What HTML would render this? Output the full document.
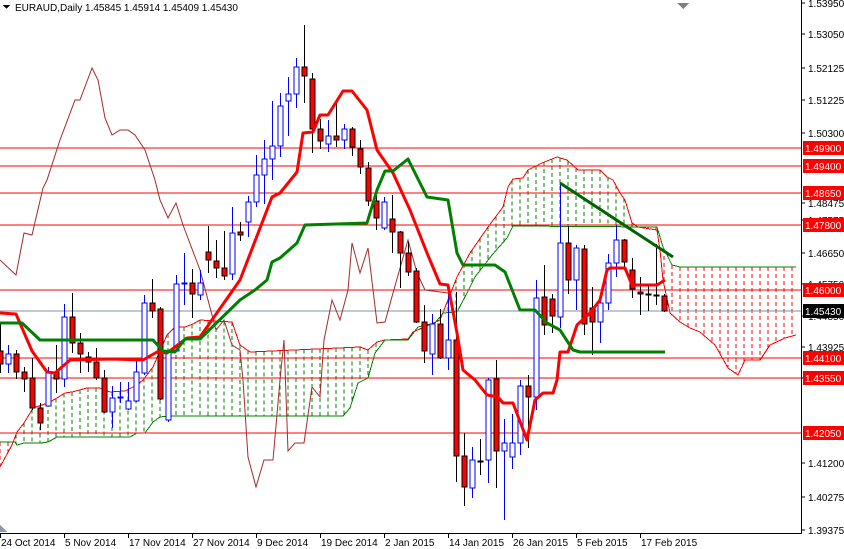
<!DOCTYPE html>
<html><head><meta charset="utf-8">
<style>
html,body{margin:0;padding:0;background:#fff;width:844px;height:549px;overflow:hidden}
svg{display:block;font-family:"Liberation Sans",sans-serif}
</style></head><body>
<svg id="s" width="844" height="549" xmlns="http://www.w3.org/2000/svg" shape-rendering="crispEdges"></svg>
<script>
var s=document.getElementById('s'),h='';
function P(a){return a.map(function(p){return p[0]+','+p[1]}).join(' ')}
function itp(a,x){if(x<=a[0][0])return a[0][1];for(var i=1;i<a.length;i++){if(x<=a[i][0]){var t=(x-a[i-1][0])/(a[i][0]-a[i-1][0]);return a[i-1][1]+t*(a[i][1]-a[i-1][1]);}}return a[a.length-1][1];}
var A=[[0,467],[12,445],[17,432],[24,423],[33,408],[48,403],[57,398],[65,393],[72,392],[87,388],[100,388],[110,392],[125,391],[137,385],[143,380],[153,367],[167,335],[175,327],[185,327],[193,324],[200,320],[232,322],[240,345],[250,352],[360,347],[368,350],[377,342],[385,340],[408,339],[413,332],[440,320],[457,277],[470,253],[488,227],[503,207],[508,187],[513,179],[523,178],[528,170],[542,163],[557,157],[567,160],[578,170],[600,170],[607,177],[613,180],[620,193],[625,200],[632,223],[638,227],[657,230],[660,250],[663,280],[670,313],[680,322],[690,328],[700,332],[715,345],[728,368],[738,375],[745,360],[760,360],[770,345],[785,338],[796,335]];
var B=[[0,442],[15,442],[17,445],[24,443],[41,443],[48,442],[57,437],[130,437],[137,433],[145,433],[153,422],[160,417],[168,416],[343,416],[350,408],[358,383],[368,378],[375,353],[385,340],[408,340],[418,327],[435,323],[443,313],[457,312],[467,293],[475,277],[492,255],[507,238],[513,226],[657,227],[663,247],[672,265],[680,267],[796,267]];
for(var x=0;x<=796;x+=8){var a=itp(A,x),b=itp(B,x);var c=a<b?'#008000':'#ff0000';h+='<line x1="'+x+'" y1="'+Math.min(a,b)+'" x2="'+x+'" y2="'+Math.max(a,b)+'" stroke="'+c+'" stroke-width="1" stroke-dasharray="4,3"/>';}
h+='<polyline points="'+P(A)+'" fill="none" stroke="#ff0000" stroke-width="1"/>';
h+='<polyline points="'+P(B)+'" fill="none" stroke="#008000" stroke-width="1"/>';
[148,166,193,225,290,358,378,433].forEach(function(y){h+='<line x1="0" y1="'+y+'" x2="801" y2="'+y+'" stroke="#ff0000" stroke-width="1"/>';});
h+='<line x1="0" y1="311" x2="801" y2="311" stroke="#8090a0" stroke-width="1"/>';
var C=[[0,260],[16,275],[24,233],[32,235],[43,188],[47,180],[60,140],[75,100],[80,100],[92,68],[98,80],[105,118],[112,135],[120,130],[128,130],[135,135],[145,150],[155,180],[160,200],[168,218],[176,203],[183,225],[200,270],[208,300],[216,330],[224,320],[232,345],[240,350],[243,380],[248,457],[256,487],[264,460],[273,460],[280,380],[284,340],[288,451],[295,443],[304,443],[312,387],[320,397],[324,340],[332,300],[340,320],[348,290],[352,243],[360,273],[368,248],[377,323],[385,322],[393,293],[408,240],[417,273],[425,290],[448,293]];
h+='<polyline points="'+P(C)+'" fill="none" stroke="#a52a2a" stroke-width="1" shape-rendering="auto"/>';
var K=[[0,351,364,323,373],[8,364,354,345,373],[16,354,372,350,379],[24,372,379,367,392],[32,378,408,358,410],[40,408,423,403,430],[48,406,372,367,406],[56,372,379,345,393],[64,379,317,304,387],[72,317,343,293,353],[80,343,354,333,373],[88,357,362,352,372],[96,362,378,348,380],[104,378,412,370,413],[112,412,398,386,428],[120,398,397,382,403],[128,409,401,382,410],[136,401,372,360,402],[144,373,303,295,375],[152,303,311,279,318],[160,309,399,307,400],[168,420,351,350,422],[176,351,284,275,352],[184,284,283,253,305],[192,283,294,269,318],[200,295,283,270,300],[208,252,260,226,273],[216,261,268,240,278],[224,268,276,231,280],[232,274,233,207,280],[240,232,235,222,241],[248,222,202,196,237],[256,202,175,155,207],[264,175,159,140,204],[272,159,146,101,180],[280,146,106,93,157],[288,101,94,77,136],[296,94,67,58,108],[304,67,76,25,103],[312,79,129,73,153],[320,129,141,119,149],[328,144,136,120,152],[336,136,140,103,147],[344,140,129,124,149],[352,129,147,127,156],[360,149,167,140,174],[368,168,201,162,206],[376,201,218,193,230],[384,228,202,197,230],[392,219,232,195,253],[400,232,253,231,288],[408,253,272,242,276],[416,271,322,268,323],[424,322,351,305,363],[432,354,324,314,375],[440,324,358,309,359],[448,358,340,292,370],[456,340,456,292,482],[464,456,487,433,506],[472,488,460,447,498],[480,461,461,439,475],[488,460,380,378,483],[496,379,451,360,488],[504,451,443,419,520],[512,457,443,414,469],[520,443,386,380,455],[528,386,397,375,448],[536,397,298,280,410],[544,297,325,265,335],[552,299,316,294,333],[560,317,243,183,328],[568,243,280,226,294],[576,280,248,245,310],[584,249,324,245,335],[592,308,322,287,355],[600,322,303,298,343],[608,303,263,254,310],[616,263,240,225,277],[624,240,262,239,270],[632,270,289,258,298],[640,292,294,277,315],[648,294,294,286,311],[656,295,295,244,305],[664,296,311,294,312]];
K.forEach(function(k){var x=k[0],o=k[1],c=k[2],bull=c<o,t=Math.min(o,c),b=Math.max(o,c);if(b-t<1)b=t+1;
var wc=bull?'#0000ff':'#000000';
h+='<line x1="'+(x+0.5)+'" y1="'+k[3]+'" x2="'+(x+0.5)+'" y2="'+k[4]+'" stroke="'+wc+'" stroke-width="1"/>';
if(bull)h+='<rect x="'+(x-2)+'" y="'+t+'" width="5" height="'+(b-t)+'" fill="#fff" stroke="#0000ff" stroke-width="1"/>';
else h+='<rect x="'+(x-2)+'" y="'+t+'" width="5" height="'+(b-t)+'" fill="#ff0000" stroke="#000" stroke-width="1"/>';});
var T=[[0,313],[16,314],[32,351],[47,372],[55,373],[70,360],[113,359],[143,360],[157,352],[167,353],[187,338],[200,337],[240,280],[272,197],[280,193],[297,172],[303,133],[313,132],[320,115],[328,115],[343,91],[352,91],[367,110],[377,150],[393,173],[410,210],[427,253],[440,284],[448,285],[457,333],[463,370],[475,380],[487,395],[498,397],[503,403],[513,403],[527,440],[535,400],[543,393],[553,393],[557,380],[560,352],[568,352],[577,325],[590,313],[600,300],[607,270],[610,268],[625,268],[632,285],[657,285],[665,280]];
h+='<polyline points="'+P(T)+'" fill="none" stroke="#ff0000" stroke-width="3" stroke-linejoin="round" shape-rendering="auto"/>';
var J=[[0,323],[22,323],[40,340],[153,340],[163,351],[175,352],[185,339],[200,339],[240,300],[255,290],[267,280],[272,262],[280,258],[297,243],[305,225],[367,223],[377,190],[385,171],[393,171],[408,159],[427,197],[448,200],[457,253],[463,265],[495,265],[505,272],[520,310],[535,310],[547,323],[560,330],[573,350],[580,352],[665,352]];
h+='<polyline points="'+P(J)+'" fill="none" stroke="#008000" stroke-width="3" stroke-linejoin="round" shape-rendering="auto"/>';
h+='<line x1="560" y1="183" x2="673" y2="257" stroke="#006400" stroke-width="3" shape-rendering="auto"/>';
h+='<rect x="801" y="0" width="43" height="549" fill="#fff"/><rect x="0" y="533" width="844" height="16" fill="#fff"/>';
h+='<line x1="801.5" y1="0" x2="801.5" y2="534" stroke="#000"/><line x1="0" y1="533.5" x2="802" y2="533.5" stroke="#000"/>';
[[3,'1.53950'],[34,'1.53050'],[68,'1.52125'],[100,'1.51225'],[133,'1.50300'],[203,'1.48475'],[220,'1.47575'],[253,'1.46650'],[284,'1.45750'],[316,'1.44850'],[347,'1.43925'],[378,'1.43025'],[463,'1.41200'],[497,'1.40275'],[530,'1.39375']].forEach(function(l){h+='<line x1="801" y1="'+l[0]+'" x2="805" y2="'+l[0]+'" stroke="#000"/><text x="808" y="'+(l[0]+4)+'" font-size="10" fill="#000">'+l[1]+'</text>';});
[[148,'1.49900'],[166,'1.49400'],[193,'1.48650'],[225,'1.47800'],[290,'1.46000'],[358,'1.44100'],[378,'1.43550'],[433,'1.42050']].forEach(function(l){h+='<rect x="803" y="'+(l[0]-7)+'" width="41" height="14" fill="#ff0000"/><text x="805" y="'+(l[0]+4)+'" font-size="10" fill="#fff">'+l[1]+'</text>';});
h+='<rect x="803" y="304" width="41" height="14" fill="#000"/><text x="805" y="315" font-size="10" fill="#fff">1.45430</text>';
['24 Oct 2014','5 Nov 2014','17 Nov 2014','27 Nov 2014','9 Dec 2014','19 Dec 2014','2 Jan 2015','14 Jan 2015','26 Jan 2015','5 Feb 2015','17 Feb 2015'].forEach(function(t,i){var x=i*64;h+='<line x1="'+(x+0.5)+'" y1="533" x2="'+(x+0.5)+'" y2="538" stroke="#000"/><text x="'+(x+1)+'" y="546" font-size="10" fill="#000">'+t+'</text>';});
h+='<polygon points="0,525 0,532 7,532" fill="#8a9aa8"/><polygon points="677,3 689,3 683,9" fill="#000" opacity="0.5"/>';
h+='<polygon points="3,5 10,5 6.5,9" fill="#000"/><text x="15" y="11" font-size="10" fill="#000">EURAUD,Daily  1.45845 1.45914 1.45409 1.45430</text>';
s.innerHTML=h;
</script>
</body></html>
